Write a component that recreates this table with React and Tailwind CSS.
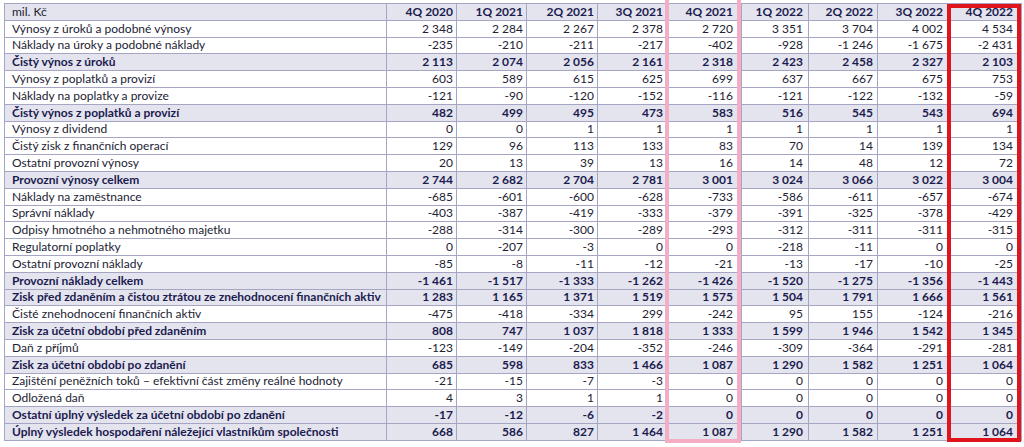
const quarters = ['4Q 2020', '1Q 2021', '2Q 2021', '3Q 2021', '4Q 2021', '1Q 2022', '2Q 2022', '3Q 2022', '4Q 2022']

const rows = [
  ['Výnosy z úroků a podobné výnosy', false, ['2 348', '2 284', '2 267', '2 378', '2 720', '3 351', '3 704', '4 002', '4 534']],
  ['Náklady na úroky a podobné náklady', false, ['-235', '-210', '-211', '-217', '-402', '-928', '-1 246', '-1 675', '-2 431']],
  ['Čistý výnos z úroků', true, ['2 113', '2 074', '2 056', '2 161', '2 318', '2 423', '2 458', '2 327', '2 103']],
  ['Výnosy z poplatků a provizí', false, ['603', '589', '615', '625', '699', '637', '667', '675', '753']],
  ['Náklady na poplatky a provize', false, ['-121', '-90', '-120', '-152', '-116', '-121', '-122', '-132', '-59']],
  ['Čistý výnos z poplatků a provizí', true, ['482', '499', '495', '473', '583', '516', '545', '543', '694']],
  ['Výnosy z dividend', false, ['0', '0', '1', '1', '1', '1', '1', '1', '1']],
  ['Čistý zisk z finančních operací', false, ['129', '96', '113', '133', '83', '70', '14', '139', '134']],
  ['Ostatní provozní výnosy', false, ['20', '13', '39', '13', '16', '14', '48', '12', '72']],
  ['Provozní výnosy celkem', true, ['2 744', '2 682', '2 704', '2 781', '3 001', '3 024', '3 066', '3 022', '3 004']],
  ['Náklady na zaměstnance', false, ['-685', '-601', '-600', '-628', '-733', '-586', '-611', '-657', '-674']],
  ['Správní náklady', false, ['-403', '-387', '-419', '-333', '-379', '-391', '-325', '-378', '-429']],
  ['Odpisy hmotného a nehmotného majetku', false, ['-288', '-314', '-300', '-289', '-293', '-312', '-311', '-311', '-315']],
  ['Regulatorní poplatky', false, ['0', '-207', '-3', '0', '0', '-218', '-11', '0', '0']],
  ['Ostatní provozní náklady', false, ['-85', '-8', '-11', '-12', '-21', '-13', '-17', '-10', '-25']],
  ['Provozní náklady celkem', true, ['-1 461', '-1 517', '-1 333', '-1 262', '-1 426', '-1 520', '-1 275', '-1 356', '-1 443']],
  ['Zisk před zdaněním a čistou ztrátou ze znehodnocení finančních aktiv', true, ['1 283', '1 165', '1 371', '1 519', '1 575', '1 504', '1 791', '1 666', '1 561']],
  ['Čisté znehodnocení finančních aktiv', false, ['-475', '-418', '-334', '299', '-242', '95', '155', '-124', '-216']],
  ['Zisk za účetní období před zdaněním', true, ['808', '747', '1 037', '1 818', '1 333', '1 599', '1 946', '1 542', '1 345']],
  ['Daň z příjmů', false, ['-123', '-149', '-204', '-352', '-246', '-309', '-364', '-291', '-281']],
  ['Zisk za účetní období po zdanění', true, ['685', '598', '833', '1 466', '1 087', '1 290', '1 582', '1 251', '1 064']],
  ['Zajištění peněžních toků – efektivní část změny reálné hodnoty', false, ['-21', '-15', '-7', '-3', '0', '0', '0', '0', '0']],
  ['Odložená daň', false, ['4', '3', '1', '1', '0', '0', '0', '0', '0']],
  ['Ostatní úplný výsledek za účetní období po zdanění', true, ['-17', '-12', '-6', '-2', '0', '0', '0', '0', '0']],
  ['Úplný výsledek hospodaření náležející vlastníkům společnosti', true, ['668', '586', '827', '1 464', '1 087', '1 290', '1 582', '1 251', '1 064']],
]

// column widths measured off the grid lines
const widths = ['w-[70px]', 'w-[70px]', 'w-[71px]', 'w-[68px]', 'w-[76px]', 'w-[67px]', 'w-[69px]', 'w-[70px]', 'w-[74px]']
const padRight = ['pr-[3px]', 'pr-[3px]', 'pr-[3px]', 'pr-[2px]', 'pr-[8px]', 'pr-[5px]', 'pr-[4px]', 'pr-[4px]', 'pr-[8px]']

export default function App() {
  return (
    <div className="h-[447px] w-[1024px] overflow-hidden bg-white pl-[4px] pt-[3px] font-['Lato','Liberation_Sans',sans-serif] text-[12px] leading-none">
      <div className="relative w-[1017px]">
        <table className="w-[1017px] table-fixed border-collapse">
          <colgroup>
            <col className="w-[382px]" />
            {widths.map((w, i) => (
              <col key={i} className={w} />
            ))}
          </colgroup>
          <thead>
            <tr className="h-[16.8px] bg-[#e4e4ee]">
              <td className="border border-[#a6a6c4] pl-[7px] text-left text-[#222233]">mil. Kč</td>
              {quarters.map((q, i) => (
                <th key={q} className={`border border-[#a6a6c4] text-right font-bold text-[#1b1b50] ${padRight[i]}`}>
                  {q}
                </th>
              ))}
            </tr>
          </thead>
          <tbody>
            {rows.map(([label, bold, vals]) => (
              <tr key={label} className={`h-[16.8px] ${bold ? 'bg-[#e4e4ee] font-bold text-[#1b1b50]' : 'bg-white text-[#222233]'}`}>
                <td className="whitespace-nowrap border border-[#a6a6c4] pl-[7px] text-left">{label}</td>
                {vals.map((v, i) => (
                  <td key={i} className={`whitespace-nowrap border border-[#a6a6c4] text-right ${padRight[i]}`}>
                    {v}
                  </td>
                ))}
              </tr>
            ))}
          </tbody>
        </table>
        {/* highlight frames drawn over the 4Q columns */}
        <div className="pointer-events-none absolute left-[661px] top-[-3px] h-[443px] w-[76px] border-x-4 border-b-4 border-[#f5adc6]" />
        <div className="pointer-events-none absolute left-[943px] top-[1px] h-[438px] w-[74px] border-4 border-[#e0141c]" />
      </div>
    </div>
  )
}
